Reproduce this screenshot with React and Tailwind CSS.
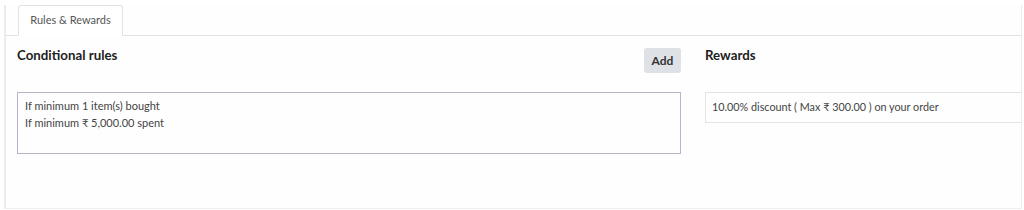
import React from 'react';

// Pestaña de reglas y recompensas de un programa de fidelidad
const App = () => {
    return (
        <div className="w-[1024px] h-[210px] bg-white pl-[4px] pr-[2px] pt-[5px] pb-[1px]" style={{ fontFamily: 'Lato, "Noto Sans", sans-serif' }}>
            <div className="h-full border-l-2 border-[#e6eef2] border-r border-b border-r-[#eeeeee] border-b-[#eeeeee] bg-[#fefefe] flex flex-col">
                {/* Pestañas */}
                <div className="flex border-b border-[#e2e2e2] pl-[12px] h-[31px] shrink-0">
                    <div className="-mb-px w-[105px] justify-center flex items-center border border-[#e2e2e2] border-b-white bg-white rounded-t-[3px] text-[11px] text-[#555]">
                        Rules &amp; Rewards
                    </div>
                </div>

                {/* Contenido */}
                <div className="flex pl-[11px] pt-[12px]">
                    {/* Reglas */}
                    <div className="w-[664px] shrink-0">
                        <div className="flex items-start justify-between h-[25px]">
                            <h3 className="text-[13.3px] leading-[14px] font-bold text-[#222]">Conditional rules</h3>
                            <button className="h-[25px] w-[37px] rounded-[3px] bg-[#dee2e6] text-[12px] font-bold text-[#333]">
                                Add
                            </button>
                        </div>
                        <div className="mt-[19px] h-[62px] border border-[#b9b4c9] px-[7px] pt-[4px] text-[11px] leading-[17px] text-[#444]">
                            <div>If minimum 1 item(s) bought</div>
                            <div>If minimum ₹ 5,000.00 spent</div>
                        </div>
                    </div>

                    {/* Recompensas */}
                    <div className="flex-1 ml-[24px]">
                        <div className="flex items-start h-[25px]">
                            <h3 className="text-[13.3px] leading-[14px] font-bold text-[#222]">Rewards</h3>
                        </div>
                        <div className="mt-[19px] h-[31px] border border-r-0 border-[#e4e4e4] px-[6px] flex items-center text-[10.8px] text-[#444]">
                            10.00% discount ( Max ₹ 300.00 ) on your order
                        </div>
                    </div>
                </div>
            </div>
        </div>
    );
};

export default App;
